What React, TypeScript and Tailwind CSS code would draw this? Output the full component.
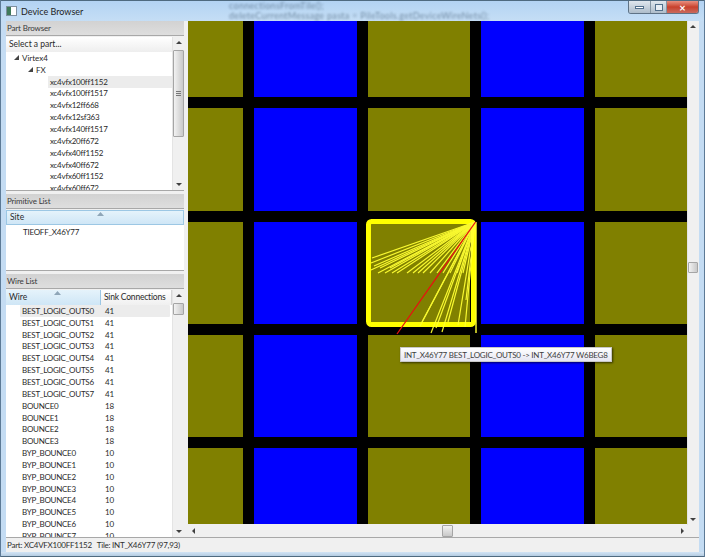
import React from "react";

const parts = ["xc4vfx100ff1152","xc4vfx100ff1517","xc4vfx12ff668","xc4vfx12sf363","xc4vfx140ff1517","xc4vfx20ff672","xc4vfx40ff1152","xc4vfx40ff672","xc4vfx60ff1152","xc4vfx60ff672"];
const wires: [string, number][] = [
  ...[0,1,2,3,4,5,6,7].map((i): [string, number] => ["BEST_LOGIC_OUTS" + i, 41]),
  ...[0,1,2,3].map((i): [string, number] => ["BOUNCE" + i, 18]),
  ...[0,1,2,3,4,5,6,7].map((i): [string, number] => ["BYP_BOUNCE" + i, 10]),
];
const colsTemplate = [0,1,2,3,4];
const rowsTemplate = [0,1,2,3,4];

const fan: [number, number][] = [
  [371,263],[371,270],[378,273],[385,273],[392,273],[397,273],[407,273],[413,273],[418,273],[423,273],[430,273],[437,273],[443,273],[450,273],[457,273],[463,273],
  [372,258],[374,266],[380,268],[390,268],
  [422,322],[431,333],[442,332],[420,326],[465,327],[466,300],[448,322],[458,325],[436,328],
];

function Arrow({ dir }: { dir: "up" | "down" | "left" | "right" }) {
  const pts = { up: "1,5 4,2 7,5", down: "1,3 4,6 7,3", left: "5,1 2,4 5,7", right: "3,1 6,4 3,7" }[dir];
  return (
    <svg width="8" height="8" viewBox="0 0 8 8" className="shrink-0"><polygon points={pts} fill="#404040" /></svg>
  );
}

function VBar({ before, size, grip, w = "w-[12px]" }: { before: string; size: string; grip?: boolean; w?: string }) {
  return (
    <div className={`flex flex-col shrink-0 h-full bg-[#f0f0f0] border-l border-[#e4e4e4] ${w}`}>
      <div className="h-[12px] flex items-center justify-center shrink-0"><Arrow dir="up" /></div>
      <div className={`shrink-0 ${before}`} />
      <div className={`shrink-0 flex items-center justify-center bg-gradient-to-r from-[#f2f2f2] to-[#c9c9c9] border border-[#a5a5a5] rounded-[1px] ${size}`}>
        {grip && <div className="w-[5px] h-[5px] border-y border-[#777] flex items-center"><div className="w-full h-px bg-[#777]" /></div>}
      </div>
      <div className="flex-1" />
      <div className="h-[12px] flex items-center justify-center shrink-0"><Arrow dir="down" /></div>
    </div>
  );
}

function SectionHead({ children }: { children: React.ReactNode }) {
  return (
    <div className="h-[15px] shrink-0 bg-gradient-to-b from-[#d2d2d2] to-[#dedede] border-b border-[#a8a8a8] flex items-center pl-[1px] text-[8px] tracking-[-0.15px] leading-none text-[#3a3a3a]">
      {children}
    </div>
  );
}

function SortMark({ className }: { className: string }) {
  return (
    <svg width="7" height="4" viewBox="0 0 7 4" className={`absolute top-[1px] ${className}`}><polygon points="0,4 3.5,0 7,4" fill="#8fa6b8" /></svg>
  );
}

export default function App() {
  return (
    <div className="w-[705px] h-[557px] overflow-hidden flex flex-col bg-[#c4dcf3] text-[#2a2a2a] border-x border-[#5d7a96]" style={{ fontFamily: 'Lato, "Noto Sans", "Liberation Sans", sans-serif' }}>
      {/* Title bar */}
      <div className="h-[21px] shrink-0 relative flex items-center bg-gradient-to-b from-[#b3d3f3] to-[#c5def5] border-t border-[#4f6a80]">
        <div className="ml-[5px] w-[11px] h-[10px] bg-white border border-[#7f8f9f] flex items-center">
          <div className="w-[4px] h-full bg-[#3f7a5a]" />
        </div>
        <span className="ml-[4px] text-[9px] leading-none text-[#1e1e1e]">Device Browser</span>
        <div className="absolute left-[228px] top-0 text-[9px] leading-[10px] tracking-[0.3px] text-[#3f5870] blur-[1.2px] whitespace-pre opacity-60">
          {"connectionsFromTile();\ndeleteCurrentMessage pasta = PileTools.getDeviceWireNets();"}
        </div>
        <div className="absolute right-[5px] top-0 h-[13px] flex border border-t-0 border-[#5e7285] rounded-b-[3px] overflow-hidden">
          <div className="w-[22px] bg-gradient-to-b from-[#dfe7ee] to-[#aebdca] flex items-center justify-center border-r border-[#8596a5]">
            <div className="w-[9px] h-[3px] bg-white border border-[#52708b]" />
          </div>
          <div className="w-[16px] bg-gradient-to-b from-[#dfe7ee] to-[#aebdca] flex items-center justify-center border-r border-[#8596a5]">
            <div className="w-[8px] h-[7px] border border-[#52708b] bg-[#e7eef4]" />
          </div>
          <div className="w-[31px] bg-gradient-to-b from-[#e88f80] via-[#c8402c] to-[#c9695c] flex items-center justify-center text-white text-[11px] font-bold leading-none">
            ×
          </div>
        </div>
      </div>

      {/* Client area */}
      <div className="flex-1 min-h-0 flex flex-col mx-[5px] bg-[#f0f0f0]">
        <div className="flex-1 min-h-0 flex gap-[4px]">
          {/* Left column */}
          <div className="w-[178px] shrink-0 flex flex-col">
            <SectionHead>Part Browser</SectionHead>
            <div className="h-[154px] shrink-0 bg-white flex border-b border-[#a8a8a8] overflow-hidden mt-[1px]">
              <div className="flex-1 min-w-0 flex flex-col overflow-hidden">
                <div className="h-[15px] shrink-0 flex items-center pl-[3px] text-[8.5px] leading-none bg-gradient-to-b from-white to-[#eeeeee]">Select a part...</div>
                <div className="flex items-center h-[11.85px] shrink-0 text-[8px] leading-none">
                  <span className="w-[16px] flex justify-end pr-[3px]"><svg width="5" height="5" viewBox="0 0 5 5"><polygon points="0,5 5,5 5,0" fill="#444" /></svg></span>
                  <span>Virtex4</span>
                </div>
                <div className="flex items-center h-[11.85px] shrink-0 text-[8px] leading-none">
                  <span className="w-[30px] flex justify-end pr-[3px]"><svg width="5" height="5" viewBox="0 0 5 5"><polygon points="0,5 5,5 5,0" fill="#444" /></svg></span>
                  <span>FX</span>
                </div>
                {parts.map((p, i) => (
                  <div key={p} className="h-[11.85px] shrink-0 flex items-center pl-[42px] text-[8px] tracking-[-0.25px] leading-none">
                    <span className={`flex-1 h-full flex items-center pl-[2px] ${i === 0 ? "bg-[#ececec]" : ""}`}>{p}</span>
                  </div>
                ))}
              </div>
              <VBar before="h-[1px]" size="h-[87px]" grip />
            </div>

            <div className="h-[3px] shrink-0" />
            <SectionHead>Primitive List</SectionHead>
            <div className="h-[61px] shrink-0 bg-white border-b border-[#a8a8a8] flex flex-col mt-[1px]">
              <div className="relative h-[15px] shrink-0 flex items-center pl-[3px] text-[8.5px] leading-none bg-gradient-to-b from-[#e5f3fb] to-[#cfe6f6] border border-[#9cc7e4]">
                Site
                <SortMark className="left-[90px]" />
              </div>
              <div className="h-[13px] flex items-center pl-[17px] text-[8px] tracking-[-0.25px] leading-none">TIEOFF_X46Y77</div>
            </div>

            <div className="h-[3px] shrink-0" />
            <SectionHead>Wire List</SectionHead>
            <div className="flex-1 min-h-0 flex bg-white overflow-hidden mt-[1px]">
              <div className="flex-1 min-w-0 flex flex-col overflow-hidden">
                <div className="h-[15px] shrink-0 flex text-[8.5px] leading-none">
                  <div className="relative w-[95px] flex items-center pl-[3px] bg-gradient-to-b from-[#e5f3fb] to-[#cfe6f6] border-r border-[#9cc7e4]">
                    Wire
                    <SortMark className="left-[48px]" />
                  </div>
                  <div className="flex-1 flex items-center pl-[3px] bg-gradient-to-b from-white to-[#f0f0f0] border-r border-[#d5d5d5] tracking-[-0.2px] whitespace-nowrap overflow-hidden">Sink Connections</div>
                </div>
                {wires.map(([w, n], i) => (
                  <div key={w} className="h-[11.85px] shrink-0 flex items-center pl-[14px] pr-[2px] text-[8px] tracking-[-0.25px] leading-none">
                    <div className={`flex-1 h-full flex items-center rounded-[1px] ${i === 0 ? "bg-[#ececec]" : ""}`}>
                      <span className="w-[85px] pl-[2px] whitespace-nowrap">{w}</span>
                      <span>{n}</span>
                    </div>
                  </div>
                ))}
              </div>
              <VBar before="h-[1px]" size="h-[12px]" />
            </div>
          </div>

          {/* Canvas column */}
          <div className="flex-1 min-w-0 flex flex-col">
            <div className="flex-1 min-h-0 flex">
              <div className="relative w-[499px] h-[503px] shrink-0 overflow-hidden bg-black">
                <div className="grid w-full h-full gap-[11px] grid-cols-[55px_103px_102px_103px_92px] grid-rows-[76px_103px_102px_102px_76px]">
                  {rowsTemplate.map((r) =>
                    colsTemplate.map((c) => (
                      <div key={`${r}-${c}`} className={c % 2 === 0 ? "bg-[#808000]" : "bg-[#0000ff]"} />
                    ))
                  )}
                </div>
                <svg className="absolute inset-0" width="499" height="503" viewBox="188 21 499 503">
                  <rect x="368.5" y="221.5" width="105" height="103" rx="3" fill="none" stroke="#ffff00" strokeWidth="5" />
                  <g stroke="#ffff33" strokeWidth="1.2" fill="none" opacity="0.95">
                    {fan.map(([x, y], i) => <line key={i} x1="475" y1="222" x2={x} y2={y} />)}
                    <line x1="476" y1="222" x2="476" y2="333" strokeWidth="1.5" />
                  </g>
                  <line x1="475.5" y1="222" x2="397" y2="334" stroke="#e81010" strokeWidth="1.3" />
                </svg>
                <div className="absolute left-[212px] top-[326px] h-[15px] w-[212px] flex items-center pl-[3px] bg-gradient-to-b from-white to-[#e6e6f2] border border-[#c8c8c8] shadow-[1px_1px_2px_rgba(0,0,0,0.6)] text-[8px] tracking-[-0.25px] leading-none text-[#3d3d3d] whitespace-nowrap">
                  INT_X46Y77 BEST_LOGIC_OUTS0 -&gt; INT_X46Y77 W6BEG8
                </div>
              </div>
              <VBar before="h-[229px]" size="h-[11px]" w="w-[11px]" />
            </div>
            <div className="h-[12px] shrink-0 flex items-center bg-[#f0f0f0]">
              <div className="w-[12px] flex items-center justify-center"><Arrow dir="left" /></div>
              <div className="w-[242px] shrink-0" />
              <div className="w-[11px] h-full bg-gradient-to-b from-[#f2f2f2] to-[#c9c9c9] border border-[#a5a5a5] rounded-[1px]" />
              <div className="flex-1" />
              <div className="w-[12px] flex items-center justify-center mr-[11px]"><Arrow dir="right" /></div>
            </div>
          </div>
        </div>

        {/* Status bar */}
        <div className="h-[15px] shrink-0 flex items-center pl-[1px] bg-[#f0f0f0] border-t border-[#a8a8a8] text-[8px] tracking-[-0.25px] leading-none text-[#2f2f2f]">
          <span>Part: XC4VFX100FF1152</span>
          <span className="ml-[5px]">Tile: INT_X46Y77 (97,93)</span>
        </div>
      </div>
      <div className="h-[5px] shrink-0 bg-gradient-to-b from-[#d2e4f5] to-[#b4cce2] border-b border-[#4f6a80]" />
    </div>
  );
}
